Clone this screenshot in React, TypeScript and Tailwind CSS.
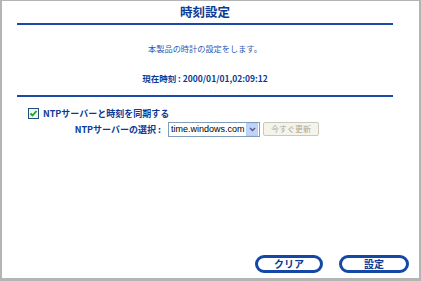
import React from "react";

export default function App() {
  const jp = { fontFamily: '"Noto Sans CJK JP", "Liberation Sans", sans-serif' } as React.CSSProperties;
  return (
    <div className="w-[421px] h-[281px] bg-white box-border border-t border-l-2 border-r-2 border-b-[3px] border-[#b4b4b4] flex flex-col" style={jp}>
      <div className="w-[376px] ml-[15px] flex flex-col">
        <div className="h-[22px] flex items-center justify-center text-[12.5px] font-bold text-[#0a3a96] leading-none">時刻設定</div>
        <div className="h-[2px] bg-[#1a49a8]" />
        <div className="mt-[17px] h-[12px] flex items-center justify-center text-[8.2px] text-[#2a5ab8] leading-none">本製品の時計の設定をします。</div>
        <div className="mt-[18px] h-[12px] flex items-center justify-center text-[8.5px] font-bold text-[#0a3a96] leading-none">現在時刻 : 2000/01/01,02:09:12</div>
        <div className="mt-[11px] h-[2px] bg-[#1a49a8]" />
      </div>
      <div className="ml-[26px] mt-[11px] flex items-center h-[11px] gap-[4px]">
        <div className="w-[11px] h-[11px] border border-[#1c5180] bg-[#f4f4ee] flex items-center justify-center">
          <svg width="9" height="9" viewBox="0 0 9 9">
            <path d="M1.5 4.5 L3.5 6.5 L7.5 2" stroke="#21a121" strokeWidth="1.8" fill="none" />
          </svg>
        </div>
        <span className="text-[9px] font-bold text-[#0a3a96] leading-none">NTPサーバーと時刻を同期する</span>
      </div>
      <div className="mt-[3px] flex items-center h-[14px]">
        <div className="w-[160px] text-right text-[9px] font-bold text-[#0a3a96] leading-none pr-[1px]">NTPサーバーの選択 :</div>
        <div className="ml-[6px] w-[92px] h-[15px] border border-[#7f9db9] bg-white flex items-center box-border">
          <span className="flex-1 pl-[2px] text-[9px] text-black leading-none whitespace-nowrap" style={{ fontFamily: '"Liberation Sans", sans-serif' }}>time.windows.com</span>
          <div className="w-[12px] h-[13px] mr-[1px] bg-[#c1d3fb] border border-[#b7cdf8] flex items-center justify-center box-border shrink-0">
            <svg width="7" height="5" viewBox="0 0 7 5">
              <path d="M1 1 L3.5 3.5 L6 1" stroke="#4d6185" strokeWidth="1.5" fill="none" />
            </svg>
          </div>
        </div>
        <div className="ml-[3px] w-[56px] h-[14px] border border-[#cac8bb] bg-[#f5f4ea] rounded-[2px] flex items-center justify-center text-[8px] text-[#aca899] leading-none box-border">今すぐ更新</div>
      </div>
      <div className="flex-1" />
      <div className="flex justify-end gap-[16px] mr-[10px] mb-[5px]">
        <div className="w-[68px] h-[18px] rounded-full border-[3px] border-[#1448a4] bg-white flex items-center justify-center text-[10px] font-bold text-[#0a3a96] leading-none box-border">クリア</div>
        <div className="w-[70px] h-[18px] rounded-full border-[3px] border-[#1448a4] bg-white flex items-center justify-center text-[10px] font-bold text-[#0a3a96] leading-none box-border">設定</div>
      </div>
    </div>
  );
}
